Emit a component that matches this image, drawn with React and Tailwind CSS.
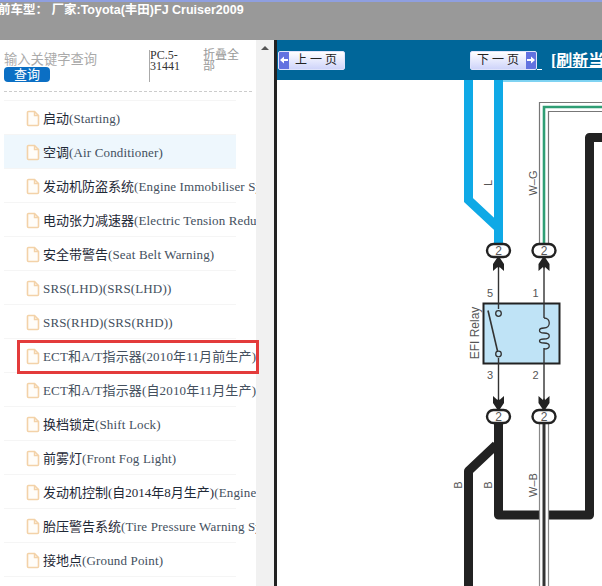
const rows = [
  { cn: "启动", en: "(Starting)" },
  { cn: "空调", en: "(Air Conditioner)", active: true },
  { cn: "发动机防盗系统", en: "(Engine Immobiliser System)" },
  { cn: "电动张力减速器", en: "(Electric Tension Reducer)" },
  { cn: "安全带警告", en: "(Seat Belt Warning)" },
  { cn: "", en: "SRS(LHD)(SRS(LHD))" },
  { cn: "", en: "SRS(RHD)(SRS(RHD))" },
  { cn: "", en: "ECT和A/T指示器(2010年11月前生产)" },
  { cn: "", en: "ECT和A/T指示器(自2010年11月生产)" },
  { cn: "换档锁定", en: "(Shift Lock)" },
  { cn: "前雾灯", en: "(Front Fog Light)" },
  { cn: "发动机控制(自2014年8月生产)", en: "(Engine Control)" },
  { cn: "胎压警告系统", en: "(Tire Pressure Warning System)" },
  { cn: "接地点", en: "(Ground Point)" },
];

const serif = "font-['Liberation_Serif','Noto_Sans_CJK_SC',serif]";

const FileIcon = () => (
  <svg width="14" height="17" viewBox="0 0 14 17" fill="none" className="shrink-0">
    <path
      d="M1.5 2.5a1 1 0 0 1 1-1h6l4 4v9a1 1 0 0 1-1 1h-9a1 1 0 0 1-1-1z"
      stroke="#f3d2a8"
      strokeWidth="1.6"
      fill="#fffdf9"
    />
    <path d="M8.5 1.5v4h4" stroke="#f3d2a8" strokeWidth="1.4" />
  </svg>
);

const PageArrow = ({ next }) => (
  <div className="flex w-[10px] shrink-0 items-center justify-center bg-[#6272e0]">
    <svg width="8" height="8" viewBox="0 0 8 8">
      <path d={next ? "M0 3H4V0.5L8 4L4 7.5V5H0z" : "M8 3H4V0.5L0 4L4 7.5V5H8z"} fill="#fff" />
    </svg>
  </div>
);

const PageButton = ({ label, next }) => (
  <div className="flex h-[19px] w-[67px] shrink-0 overflow-hidden rounded-[2px] border border-[#dfe3fb] bg-gradient-to-b from-white to-[#cfd4fa]">
    {!next && <PageArrow />}
    <div className="flex flex-1 items-center justify-center pl-[2px] text-[12px] leading-none tracking-[3px] text-[#222]">
      {label}
    </div>
    {next && <PageArrow next />}
  </div>
);

const Connector = ({ x, y }) => (
  <g>
    <rect x={x - 11.5} y={y - 6.5} width="23" height="13" rx="6.5" fill="#fff" stroke="#222" strokeWidth="2.4" />
    <text x={x} y={y + 4} fontSize="12" textAnchor="middle" fill="#555" fontFamily="Liberation Sans">
      2
    </text>
  </g>
);

const Arrow = ({ x, y }) => (
  <path
    d={`M${x - 1.5} ${y}L${x - 5.5} ${y + 6}V${y + 13}L${x - 1} ${y + 9}L${x} ${y + 11}L${x + 1} ${y + 9}L${x + 5.5} ${y + 13}V${y + 6}L${x + 1.5} ${y}z`}
    fill="#222"
  />
);

const ArrowDown = ({ x, y }) => (
  <path
    d={`M${x - 5.5} ${y}L${x - 1} ${y + 4}L${x} ${y + 2}L${x + 1} ${y + 4}L${x + 5.5} ${y}V${y + 7}L${x + 1.5} ${y + 13}H${x - 1.5}L${x - 5.5} ${y + 7}z`}
    fill="#222"
  />
);

const Label = ({ x, y, children, rotate = true, size = 11 }) => (
  <text
    x={x}
    y={y}
    fontSize={size}
    fill="#555"
    textAnchor="middle"
    fontFamily="Liberation Sans"
    transform={rotate ? `rotate(-90 ${x} ${y})` : undefined}
  >
    {children}
  </text>
);

// coordinates match the page, the svg is shifted by viewBox
const Diagram = () => (
  <svg viewBox="277 80 325 506" className="block h-[506px] w-[325px]" fill="none">
    <path d="M503 81H602" stroke="#7fd3f2" strokeWidth="2" />
    <path d="M468.5 80V200L498.5 228" stroke="#0fa9e6" strokeWidth="9" />
    <path d="M498.5 80V244" stroke="#0fa9e6" strokeWidth="9" />

    <path d="M539.5 244V102.5H602" stroke="#777" strokeWidth="1.2" />
    <path d="M544 244V107H602" stroke="#2f9e74" strokeWidth="2.6" />
    <path d="M548.5 244V111.5H602" stroke="#777" strokeWidth="1.2" />

    <path d="M602 137.5H589.5V515H498.5V424" stroke="#222" strokeWidth="9" strokeLinejoin="round" />
    <path d="M468.5 586V471L496 445" stroke="#222" strokeWidth="9" strokeLinejoin="round" />

    <path d="M539 505H549V525H539z" fill="#fff" />
    <path d="M539.5 424V586M548.5 424V586" stroke="#888" strokeWidth="1.2" />
    <path d="M544 424V586" stroke="#333" strokeWidth="3" />

    <rect x="483.5" y="303.5" width="76" height="60" fill="#bfe3f6" stroke="#222" strokeWidth="2" />
    <path d="M498.5 262V309M498.5 358V400" stroke="#333" strokeWidth="1.4" />
    <path d="M544 262V318M544 348V400" stroke="#333" strokeWidth="1.4" />
    <circle cx="498.5" cy="313.5" r="2.8" fill="#bfe3f6" stroke="#333" strokeWidth="1.3" />
    <circle cx="498.5" cy="354" r="2.8" fill="#bfe3f6" stroke="#333" strokeWidth="1.3" />
    <path d="M488 310.5L497.5 351" stroke="#333" strokeWidth="1.6" />
    <path
      d="M544 318C551 318 551 328 544 328C538 328 538 333 544 333C551 333 551 339 544 339C538 339 538 343 544 343C551 343 551 349 544 349"
      stroke="#333"
      strokeWidth="1.3"
    />

    <Connector x={498.5} y={250.5} />
    <Connector x={544} y={250.5} />
    <Connector x={498.5} y={416.5} />
    <Connector x={544} y={416.5} />
    <Arrow x={498.5} y={258} />
    <Arrow x={544} y={258} />
    <ArrowDown x={498.5} y={396} />
    <ArrowDown x={544} y={396} />

    <Label x={492} y={183}>L</Label>
    <Label x={537} y={183}>W–G</Label>
    <Label x={479} y={333} size={12}>EFI Relay</Label>
    <Label x={490} y={297} rotate={false}>5</Label>
    <Label x={535.5} y={297} rotate={false}>1</Label>
    <Label x={490} y={379} rotate={false}>3</Label>
    <Label x={535.5} y={379} rotate={false}>2</Label>
    <Label x={462} y={485}>B</Label>
    <Label x={492} y={485}>B</Label>
    <Label x={537} y={485}>W–B</Label>
  </svg>
);

export default function App() {
  return (
    <div className="relative flex h-[586px] w-[602px] flex-col overflow-hidden bg-white font-['Liberation_Sans','Noto_Sans_CJK_SC',sans-serif]">
      <div className="h-10 shrink-0 border-t-2 border-[#8f9fe0] bg-[#999999]">
        <p className="-ml-[2px] whitespace-nowrap text-[12.5px] font-bold leading-[16px] text-white">
          前车型： 厂家:Toyota(丰田)FJ Cruiser2009
        </p>
      </div>

      <div className="flex min-h-0 flex-1">
        <aside className="w-[256px] shrink-0 overflow-hidden">
          <div className="mx-1 flex h-[52px] border-b border-dashed border-[#cccccc]">
            <div className="w-[145px] shrink-0 pt-3">
              <p className="text-[13.3px] leading-4 text-[#aaaaaa]">输入关键字查询</p>
              <button className="-mt-[1px] block h-[15px] w-[46px] rounded-[4px] bg-[#0b6fc4] text-[13px] leading-[15px] text-white">
                查询
              </button>
            </div>
            <div className={`mt-[10px] h-[32px] w-[54px] shrink-0 border-l border-[#aaaaaa] text-[12px] leading-[11px] text-[#333] ${serif}`}>
              PC.5-
              <br />
              31441
            </div>
            <div className="mt-[10px] w-[38px] text-[12px] leading-[11px] text-[#999999]">折叠全部</div>
          </div>
          <ul className="mx-1 mt-2 w-[232px] border-t border-[#f5f5f5]">
            {rows.map((row) => (
              <li
                key={row.cn + row.en}
                className={`flex h-[34px] items-center gap-[3px] whitespace-nowrap border-b border-[#f5f5f5] pl-[22px] pt-[2px] text-[13px] ${serif} ${
                  row.active ? "bg-[#eef7fd]" : ""
                }`}
              >
                <FileIcon />
                <span className="text-[#1f2937]">{row.cn}</span>
                <span className="-ml-[3px] tracking-[0.15px] text-[#44505e]">{row.en}</span>
              </li>
            ))}
          </ul>
        </aside>

        <div className="flex w-[18px] shrink-0 justify-center bg-[#f1f1f1] pt-[6px]">
          <div className="h-0 w-0 border-x-[4px] border-b-[4px] border-x-transparent border-b-[#555]" />
        </div>
        <div className="w-[3px] shrink-0 bg-[#222]" />

        <main className="min-w-0 flex-1 overflow-hidden">
          <div className="flex h-10 items-center gap-[125px] overflow-hidden whitespace-nowrap bg-[#006699] pl-[1px]">
            <PageButton label="上一页" />
            <div className="flex shrink-0 items-center">
              <PageButton label="下一页" next />
              <div className="mt-[18px] h-px w-[5px] bg-white" />
              <a className={`ml-[9px] mt-[2px] text-[16px] font-bold text-white underline ${serif}`}>[刷新当前页]</a>
            </div>
          </div>
          <Diagram />
        </main>
      </div>

      <div className="absolute left-[17px] top-[340px] h-[34px] w-[242px] border-[3px] border-[#e33b3b]" />
    </div>
  );
}
